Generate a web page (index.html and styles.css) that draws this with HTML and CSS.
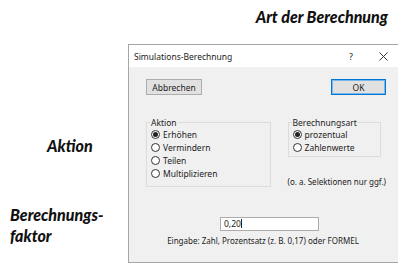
FILE: index.html
```html
<!DOCTYPE html>
<html lang="de">
<head>
    <meta charset="UTF-8">
    <title>Simulations-Berechnung</title>
    <link rel="stylesheet" href="styles.css">
</head>
<body>
    <div class="kopf">Art der Berechnung</div>
    <div class="inhalt">
        <div class="hinweise">
            <div class="hinweis aktion">Aktion</div>
            <div class="hinweis faktor">Berechnungs-<br>faktor</div>
        </div>

        <div class="dialog">
            <div class="titelleiste">
                <span class="titel">Simulations-Berechnung</span>
                <span class="titel-knopf">?</span>
                <span class="titel-knopf schliessen">
                    <svg width="9" height="9" viewBox="0 0 9 9">
                        <path d="M0.5 0.5 L8.5 8.5 M8.5 0.5 L0.5 8.5" stroke="#333" stroke-width="1" fill="none"/>
                    </svg>
                </span>
            </div>
            <div class="dialog-koerper">
                <div class="knopfzeile">
                    <button class="knopf">Abbrechen</button>
                    <button class="knopf standard">OK</button>
                </div>

                <div class="gruppen">
                    <fieldset class="gruppe gruppe-aktion">
                        <legend>Aktion</legend>
                        <div class="option"><span class="radio an"></span>Erhöhen</div>
                        <div class="option"><span class="radio"></span>Vermindern</div>
                        <div class="option"><span class="radio"></span>Teilen</div>
                        <div class="option"><span class="radio"></span>Multiplizieren</div>
                    </fieldset>
                    <div class="rechte-spalte">
                        <fieldset class="gruppe gruppe-art">
                            <legend>Berechnungsart</legend>
                            <div class="option"><span class="radio an"></span>prozentual</div>
                            <div class="option"><span class="radio"></span>Zahlenwerte</div>
                        </fieldset>
                        <div class="notiz">(o. a. Selektionen nur ggf.)</div>
                    </div>
                </div>

                <div class="eingabe">
                    <div class="feld">0,20<span class="cursor"></span></div>
                    <div class="hilfe">Eingabe: Zahl, Prozentsatz (z. B. 0,17) oder FORMEL</div>
                </div>
            </div>
        </div>
    </div>
</body>
</html>
```

FILE: styles.css
```css
body {
    margin: 0;
    background-color: #fff;
    font-family: "Noto Sans", "Open Sans", sans-serif;
    width: 398px;
    height: 263px;
    overflow: hidden;
}

.kopf,
.hinweis {
    font-family: Lato, "Liberation Sans", sans-serif;
    font-weight: 900;
    font-style: italic;
    font-size: 16px;
    color: #111;
}

.kopf {
    height: 44px;
    box-sizing: border-box;
    padding: 7px 10px 0 0;
    text-align: right;
}

.inhalt {
    display: flex;
}

.hinweise {
    width: 128px;
    flex-shrink: 0;
}

.aktion {
    margin: 92px 0 0 47px;
}

.faktor {
    margin: 49px 0 0 10px;
    line-height: 21px;
}

.dialog {
    width: 270px;
    height: 219px;
    box-sizing: border-box;
    border: 1px solid #a6a6a6;
    border-right: none;
    background-color: #f0f0f0;
    font-size: 8.5px;
    color: #222;
}

.titelleiste {
    display: flex;
    align-items: center;
    height: 22px;
    background-color: #fff;
    padding-left: 5px;
}

.titel {
    flex: 1;
}

.titel-knopf {
    width: 34px;
    text-align: center;
    font-size: 9px;
}

.schliessen {
    width: 30px;
    display: flex;
    justify-content: center;
}

.dialog-koerper {
    padding: 12px 12px 0 17px;
}

.knopfzeile {
    display: flex;
    justify-content: space-between;
}

.knopf {
    height: 16px;
    padding: 0;
    width: 56px;
    font-family: inherit;
    font-size: 8.5px;
    color: #222;
    background-color: #e1e1e1;
    border: 1px solid #adadad;
}

.knopf.standard {
    width: 55px;
    border-color: #0078d7;
    box-shadow: inset 0 0 0 1px #7ab6e8;
}

.gruppen {
    display: flex;
    margin-top: 22px;
}

.gruppe {
    margin: 0;
    border: 1px solid #dcdcdc;
    padding: 0 0 3px 4px;
}

.gruppe legend {
    padding: 0 1px;
    margin-left: -1px;
    line-height: 11px;
}

.gruppe-aktion {
    width: 129px;
    box-sizing: border-box;
}

.rechte-spalte {
    margin-left: 17px;
}

.gruppe-art {
    width: 93px;
    box-sizing: border-box;
    padding-bottom: 2px;
}

.option {
    display: flex;
    align-items: center;
    height: 13px;
}

.radio {
    width: 9px;
    height: 9px;
    box-sizing: border-box;
    border: 1px solid #333;
    border-radius: 50%;
    background-color: #fff;
    margin-right: 3px;
    display: flex;
    align-items: center;
    justify-content: center;
}

.radio.an::after {
    content: "";
    width: 5px;
    height: 5px;
    border-radius: 50%;
    background-color: #222;
}

.notiz {
    margin-top: 19px;
    white-space: nowrap;
    font-size: 8px;
}

.eingabe {
    display: flex;
    flex-direction: column;
    align-items: center;
    margin-top: 30px;
    padding-right: 6px;
}

.feld {
    width: 99px;
    height: 14px;
    box-sizing: border-box;
    background-color: #fff;
    border: 1px solid #adadad;
    padding-left: 3px;
    line-height: 12px;
    margin-left: 13px;
}

.cursor {
    display: inline-block;
    width: 1px;
    height: 9px;
    background-color: #222;
    vertical-align: -1px;
}

.hilfe {
    margin-top: 4px;
    font-size: 8px;
}
```
